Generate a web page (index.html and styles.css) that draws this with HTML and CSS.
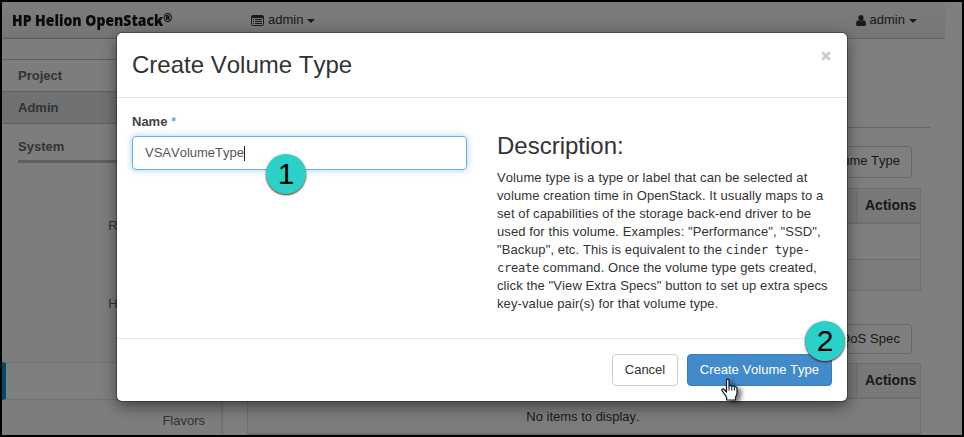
FILE: index.html
```html
<!DOCTYPE html>
<html lang="en">
<head>
<meta charset="utf-8">
<title>Create Volume Type</title>
<link rel="stylesheet" href="styles.css">
</head>
<body>
<div class="frame">
  <header class="topbar">
    <div class="logo"><span>HP Helion OpenStack<small>®</small></span></div>
    <div class="picker">
      <svg width="13" height="11" viewBox="0 0 13 11"><path d="M1.5.5h10a1 1 0 0 1 1 1v8a1 1 0 0 1-1 1h-10a1 1 0 0 1-1-1v-8a1 1 0 0 1 1-1z" fill="none" stroke="#333"/><path d="M1 1h11v2H1zM2 4h1v1H2zM4 4h7v1H4zM2 6h1v1H2zM4 6h7v1H4zM2 8h1v1H2zM4 8h7v1H4z" fill="#333"/></svg>
      <span>admin</span><i class="caret"></i>
    </div>
    <div class="user">
      <svg width="10" height="11" viewBox="0 0 10 11"><ellipse cx="5" cy="3" rx="2.6" ry="3" fill="#333"/><path d="M0 9.3C0 6.8.8 5.4 2.4 5.2c1.5 1.4 3.700 1.400 5.200 0C9.200 5.400 10 6.800 10 9.300c0 1-.7 1.700-1.700 1.700H1.700C.7 11 0 10.300 0 9.300z" fill="#333"/></svg>
      <span>admin</span><i class="caret"></i>
    </div>
  </header>
  <div class="page">
    <nav class="sidebar">
      <div class="panel">Project</div>
      <div class="panel selected">Admin</div>
      <div class="group">System</div>
      <ul class="links">
        <li>Resource Usage</li>
        <li></li>
        <li>Host Aggregates</li>
        <li></li>
        <li class="active"></li>
        <li>Flavors</li>
      </ul>
    </nav>
    <main class="content">
      <div class="rule"></div>
      <div class="tools"><span class="ghost">Create Volume Type</span></div>
      <div class="table">
        <div class="head"><b>Actions</b></div>
        <div class="row"></div>
        <div class="row foot"></div>
      </div>
      <div class="tools second"><span class="ghost">QoS Spec</span></div>
      <div class="table">
        <div class="head"><b>Actions</b></div>
        <div class="row empty">No items to display.</div>
      </div>
    </main>
  </div>
  <div class="backdrop"></div>
  <section class="modal">
    <div class="modal-head"><h3>Create Volume Type</h3><svg class="close" width="10" height="10" viewBox="0 0 10 10"><path d="M1.200 1.200l7.600 7.600M8.800 1.200L1.200 8.800" stroke="#ccc" stroke-width="2.800"/></svg></div>
    <div class="modal-body">
      <div class="form">
        <label>Name <span>*</span></label>
        <div class="input">VSAVolumeType<i></i></div>
      </div>
      <div class="help">
        <h3>Description:</h3>
        <p>Volume type is a type or label that can be selected at<br>volume creation time in OpenStack. It usually maps to a<br>set of capabilities of the storage back-end driver to be<br>used for this volume. Examples: "Performance", "SSD",<br>"Backup", etc. This is equivalent to the <code>cinder type-</code><br><code>create</code> command. Once the volume type gets created,<br>click the "View Extra Specs" button to set up extra specs<br>key-value pair(s) for that volume type.</p>
      </div>
    </div>
    <div class="modal-foot"><span class="btn">Cancel</span><span class="btn primary">Create Volume Type</span></div>
  </section>
  <div class="step one">1</div>
  <div class="step two">2</div>
  <svg class="cursor" width="18" height="23" viewBox="0 0 18 23"><path d="M5.700 22v-2.500L3.500 16 1 12.700c-.6-1.300.9-2.400 2.200-1.200L5.500 14V2.500C5.500.7 8 .7 8 2.500V8c.5-1 2.600-.8 2.800.3.600-.8 2.200-.5 2.500.6.900-.5 2.700 0 2.700 1.700v5L14.500 19.500V22z" fill="#fff" stroke="#112" stroke-width="1.200" stroke-linejoin="round"/><path d="M8 8v4.500M10.800 8.500v4M13.400 9.500v3" stroke="#112"/></svg>
</div>
</body>
</html>
```
FILE: styles.css
```css
* { box-sizing: border-box; }
body {
  margin: 0;
  font: 13px/18px "Liberation Sans", Arial, sans-serif;
  font-kerning: none;
  color: #333;
}
.frame {
  position: relative;
  width: 964px;
  height: 437px;
  border: 2px solid #000;
  background: #fff;
  overflow: hidden;
}
.topbar {
  display: flex;
  align-items: center;
  width: 943px;
  height: 37px;
  padding-left: 10px;
  background: linear-gradient(#f8f8f8, #ebebeb);
  border-bottom: 1px solid #c8c8c8;
}
.logo { width: 239px; white-space: nowrap; }
.logo span {
  display: inline-block;
  font: 800 16.5px/20px "Open Sans", sans-serif;
  color: #151515;
  transform: scaleX(.845);
  transform-origin: left;
}
.logo small { font-size: 13px; line-height: 10px; vertical-align: 4px; }
.picker, .user { display: flex; align-items: center; gap: 4px; }
.user { margin-left: auto; margin-right: 28px; }
.caret { border: 4px solid transparent; border-top-color: #333; border-bottom: 0; margin-top: 2px; }
.page { display: flex; height: 396px; }
.sidebar {
  width: 220px;
  padding-top: 20px;
  background: #fafafa;
  border-right: 1px solid #ddd;
  box-shadow: 0 0 4px rgba(0,0,0,.2);
}
.panel {
  height: 32px;
  padding-left: 16px;
  border-top: 1px solid #c0c0c0;
  font-weight: bold;
  line-height: 32px;
  color: #666;
}
.selected { height: 33px; background: #dfe3e7; border-bottom: 1px solid #c0c0c0; }
.group {
  height: 39px;
  margin-left: 16px;
  padding-top: 14px;
  border-bottom: 3px solid #c0c0c0;
  font-weight: bold;
  color: #666;
}
.links { margin: 42px 0 0; padding: 0; list-style: none; text-align: right; color: #666; }
.links li { height: 39px; padding-right: 16px; line-height: 41px; }
.links .active { height: 38px; margin-top: 1px; border: 1px solid #e0e0e0; border-left: 4px solid #0096d6; background: #fff; }
.content { width: 708px; padding: 88px 0 0 25px; }
.rule { height: 1px; background: #ccc; }
.tools { display: flex; justify-content: flex-end; padding: 18px 18px 10px 0; }
.second { padding-top: 33px; padding-bottom: 9px; }
.ghost { height: 32px; padding: 0 11px; border: 1px solid #ccc; border-radius: 4px; line-height: 28px; }
.second .ghost { width: 120px; height: 30px; line-height: 27px; text-align: right; letter-spacing: .1px; }
.table { width: 674px; border: 1px solid #ddd; }
.head { display: flex; justify-content: flex-end; height: 35px; border-bottom: 2px solid #ddd; background: #f2f2f2; font-size: 14px; line-height: 33px; }
.head b { width: 64px; padding-left: 8px; border-left: 1px solid #ddd; }
.row { height: 35px; line-height: 35px; text-align: center; }
.foot { height: 31px; border-top: 1px solid #ddd; background: #f9f9f9; }
.empty { padding-right: 2px; background: #f9f9f9; border-bottom: 1px solid #ddd; }
.backdrop { position: absolute; inset: 0; background: rgba(0,0,0,.5); }
.modal {
  position: absolute;
  left: 115px;
  top: 31px;
  width: 730px;
  height: 368px;
  background: #fff;
  border-radius: 5px;
  box-shadow: 0 0 0 1px rgba(0,0,0,.3), 0 5px 15px rgba(0,0,0,.5);
}
.modal-head { display: flex; justify-content: space-between; height: 65px; padding: 15px 15px 0; border-bottom: 1px solid #e5e5e5; }
.close { margin: 3px 1px 0 0; }
h3 { margin: 0; font-size: 24px; font-weight: normal; line-height: 34px; }
.modal-body { display: flex; gap: 30px; height: 240px; padding: 15px 15px 0; }
.form { width: 335px; }
label { display: block; height: 23px; font-weight: bold; color: #444; }
label span { color: #428bca; font-weight: normal; }
.input {
  display: flex;
  align-items: center;
  height: 34px;
  padding: 0 12px;
  border: 1px solid #66afe9;
  border-radius: 4px;
  box-shadow: 0 0 7px rgba(102,175,233,.6);
  color: #555;
}
.input i { width: 1px; height: 15px; background: #222; }
.help { width: 335px; padding-top: 16px; }
.help p { margin: 6px 0 0; white-space: nowrap; letter-spacing: .1px; }
code { font: 12px/14px "DejaVu Sans Mono", monospace; letter-spacing: -.2px; }
.modal-foot { display: flex; justify-content: flex-end; gap: 9px; height: 63px; padding: 15px 15px 0; border-top: 1px solid #e5e5e5; }
.btn { height: 32px; padding: 0 12px; border: 1px solid #ccc; border-radius: 4px; line-height: 29px; white-space: nowrap; }
.btn:first-child { width: 66px; }
.primary { background: #428bca; border-color: #357ebd; color: #fff; }
.step {
  position: absolute;
  width: 40px;
  height: 40px;
  border-radius: 50%;
  background: #2bd1c9;
  box-shadow: 0 1px 2px rgba(80,0,0,.9);
  color: #000;
  font-size: 30px;
  line-height: 39px;
  text-align: center;
}
.one { left: 264px; top: 152px; }
.two { left: 803px; top: 319px; }
.cursor { position: absolute; left: 719px; top: 376px; filter: drop-shadow(4px 2px 2px rgba(0,0,0,.5)); }
```
